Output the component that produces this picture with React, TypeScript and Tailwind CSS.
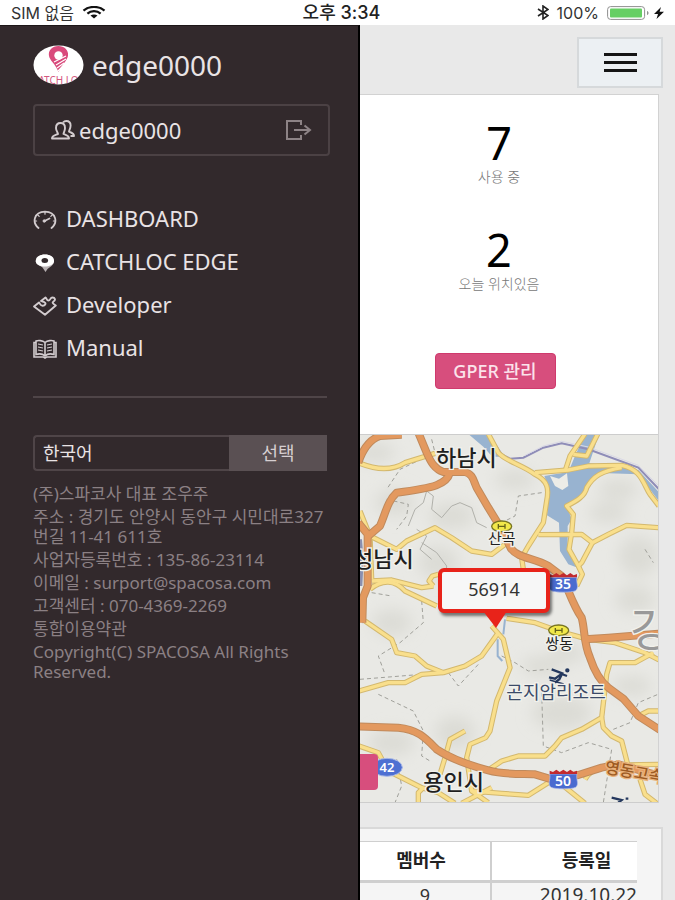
import { useState } from "react"

const MENU = [
  { label: "DASHBOARD", icon: <GaugeIcon /> },
  { label: "CATCHLOC EDGE", icon: <PinIcon /> },
  { label: "Developer", icon: <PuzzleIcon /> },
  { label: "Manual", icon: <BookIcon /> },
]

const HIGHWAYS = [
  "M10 110 C25 65 45 40 75 30 L140 26",
  "M190 20 L215 80 C228 110 240 130 265 138 L330 138 C355 145 355 165 365 185 L400 245 L440 310 L468 368 C490 398 540 395 580 420 L620 450 C640 490 655 540 680 575 C690 610 685 650 705 695 C720 740 735 765 760 785 L805 818 L850 870 L915 912",
  "M285 140 C275 175 240 185 125 200 C98 225 92 260 75 300 L40 330",
  "M10 290 L38 325 L38 480 L24 515 L22 590",
  "M10 901 L130 905 C190 910 215 940 245 970 C290 1000 350 1020 400 1033 C450 1047 500 1043 540 1045 L590 1060 L670 1047 L740 1025 L790 1015 L915 1050",
  "M690 640 L760 635 L915 623",
]

const ROADS = [
  "M15 112 C60 130 110 135 150 110 L240 82",
  "M400 24 L430 80 C450 105 500 115 540 145 C580 165 582 190 575 225 L565 290 L520 360 L500 395 L505 430",
  "M540 140 L640 132 L700 120 L800 118 C860 130 865 175 885 205 L912 240",
  "M690 24 L645 90 L632 130",
  "M728 24 L695 90 L655 85",
  "M800 125 C740 135 715 150 695 185 C690 210 665 225 635 240 L655 265 L650 320 L642 370 L670 420 L682 445 L665 480",
  "M550 326 L680 325 L712 350 L760 325 L815 298 L912 305",
  "M712 350 L680 410 L668 422",
  "M45 330 L125 370 L155 345 L240 305 L290 335 L350 375 L410 385 L450 355",
  "M15 255 L45 330 L50 460",
  "M45 490 C80 460 120 460 150 495 L245 540",
  "M50 465 L110 462 L200 485 L235 480",
  "M235 480 L222 465 L232 450 L250 445",
  "M30 585 L110 640 L125 680 L180 690 L215 720 L265 740",
  "M12 795 L100 770 L150 770 L200 745 L265 740 L330 720 L380 690 L430 620",
  "M410 600 L445 640 L465 725 L425 825 L405 915 L392 935 L345 955 L335 995 L350 1095 L400 1130",
  "M455 577 L540 590 L610 615 L700 640 L780 650 L870 680 L912 702",
  "M895 680 L840 710 L765 710 L755 745 L740 875 L680 910 L620 935 L600 960 L570 990 L490 990 L440 1005 L400 1032",
  "M740 875 L745 905 L770 930 L800 945 L818 1015",
  "M330 915 L285 940 L270 995 L255 1045",
  "M12 960 L70 980 L100 1035 L200 1085 L250 1100 L300 1132",
  "M205 1085 L190 1100 L190 1132",
  "M350 1095 L440 1102 L520 1108 L580 1070",
  "M620 1075 L690 1132",
  "M912 855 L880 855 L850 870",
  "M855 1060 L870 1105 L905 1132",
  "M690 1060 C715 1020 750 1015 912 1015",
  "M320 1132 L410 1085",
]

const TRAILS = [
  "M230 40 L240 80 L135 130 L95 190",
  "M95 220 L160 235 L155 270 L125 310",
  "M560 200 L490 210 L480 270 L440 290",
  "M200 525 L205 590 L135 650 L70 690 L90 745",
  "M15 760 L200 745",
  "M70 805 L175 855 L205 915 L200 990 L225 1005",
  "M280 740 L310 780 L370 715",
  "M560 800 L565 960 L620 980 L700 950 L770 970 L745 1130",
  "M440 690 L480 710 L520 735 L580 730",
  "M125 1000 L140 1080 L120 1130",
  "M775 910 L825 890 L850 830 L909 805",
  "M870 370 L895 410 M50 500 L110 510",
]

const SHADES = [
  [60, 80, 60, 30], [120, 230, 60, 40], [290, 270, 70, 40], [250, 410, 60, 50],
  [480, 160, 60, 30], [790, 190, 60, 30], [760, 260, 60, 30], [850, 390, 60, 60],
  [110, 590, 60, 40], [620, 860, 90, 50], [110, 950, 70, 40], [560, 720, 60, 30],
  [300, 920, 60, 50], [640, 680, 50, 30], [830, 780, 60, 30], [840, 520, 60, 40],
]

export default function App() {
  return (
    <div className="flex h-screen flex-col overflow-hidden bg-[#e9e9e9] font-['Noto_Sans','Noto_Sans_CJK_KR',sans-serif]">
      <StatusBar />
      <div className="flex min-h-0 flex-1">
        <Sidebar />
        <Content />
      </div>
    </div>
  )
}

function StatusBar() {
  return (
    <header className="grid h-[25px] shrink-0 grid-cols-3 items-center bg-white px-[11px] font-['Inter','Noto_Sans_CJK_KR',sans-serif] text-base leading-6 text-[#333]">
      <div className="flex items-center gap-2">
        <span>SIM 없음</span>
        <svg className="h-[13px] w-6" viewBox="0 0 24 13" fill="none" stroke="#111" strokeWidth="2.2">
          <path d="M1.5 4.6 C7 -0.3 17 -0.3 22.5 4.6" />
          <path d="M5.4 7.6 C9 4.4 15 4.4 18.6 7.6" />
          <path d="M8.5 9.6 C10.5 8 13.5 8 15.5 9.6 L12 12.6z" fill="#111" stroke="none" />
        </svg>
      </div>
      <div className="pl-2 text-center text-lg leading-6 font-medium whitespace-nowrap text-[#222]">오후 3:34</div>
      <div className="flex items-center justify-end gap-2">
        <svg className="h-[15px] w-3" viewBox="0 0 12 15" fill="none" stroke="#222" strokeWidth="1.6">
          <path d="M1 4 L11 10.5 L6 14 V1 L11 4.5 L1 11" />
        </svg>
        <span>100%</span>
        <svg className="h-[14px] w-[43px]" viewBox="0 0 43 14">
          <rect x="0.6" y="0.6" width="37" height="12.8" rx="3" fill="#fff" stroke="#8f8f8f" />
          <rect x="3" y="2.6" width="32" height="8.8" rx="1" fill="#66cf64" />
          <path d="M40 5 C42 5.5 42 8.5 40 9z" fill="#8f8f8f" />
        </svg>
        <svg className="-ml-1 h-3 w-[10px]" viewBox="0 0 10 12">
          <path d="M7 0 L0 7 H4 L2.5 12 L10 4.8 H5.6z" fill="#111" />
        </svg>
      </div>
    </header>
  )
}

function Sidebar() {
  const [lang, setLang] = useState("ko")

  return (
    <aside className="w-[360px] shrink-0 border-t border-r-2 border-black border-t-[#1d1718] bg-[#32292c] pr-7 pl-[33px] text-[#e9e3e5]">
      <div className="flex h-[78px] items-center gap-2">
        <LogoIcon />
        <span className="text-[28px] leading-9">edge0000</span>
      </div>
      <div className="flex h-[52px] items-center gap-1 rounded-sm border-2 border-[#4b4144] px-4">
        <UsersIcon />
        <span className="flex-1 text-[22px] leading-7">edge0000</span>
        <button type="button" aria-label="logout">
          <svg className="h-5 w-[26px]" viewBox="0 0 26 20" fill="none" stroke="#8d8386" strokeWidth="2">
            <path d="M15 5 V1 H1 V19 H15 V15" />
            <path d="M8 10 H23 M18.5 5.5 L24 10 L18.5 14.5" />
          </svg>
        </button>
      </div>

      <nav className="mt-10 mr-[3px] flex flex-col border-b-2 border-[#4f4548] pb-7">
        {MENU.map((item) => (
          <a key={item.label} href="#" className="flex h-[43px] items-center gap-[9px] text-[22px]">
            {item.icon}
            <span className="leading-7">{item.label}</span>
          </a>
        ))}
      </nav>

      <div className="mt-[37px] mr-[3px] flex h-9">
        <select
          aria-label="언어"
          value={lang}
          onChange={(ev) => setLang(ev.target.value)}
          className="min-w-0 flex-1 appearance-none rounded-l-sm border-2 border-r-0 border-[#4f4548] bg-transparent px-2 text-lg leading-6 text-[#e9e3e5]"
        >
          <option value="ko">한국어</option>
          <option value="en">English</option>
        </select>
        <button type="button" className="w-[98px] bg-[#5a5053] text-lg leading-6 text-[#d6cfd1]">
          선택
        </button>
      </div>

      <footer className="mt-[13px] flex flex-col gap-[3px] text-[17px] leading-5 whitespace-nowrap text-[#8b8084]">
        <p>(주)스파코사 대표 조우주</p>
        <p>
          주소 : 경기도 안양시 동안구 시민대로327
          <br />
          번길 11-41 611호
        </p>
        <p>사업자등록번호 : 135-86-23114</p>
        <p>이메일 : surport@spacosa.com</p>
        <p>고객센터 : 070-4369-2269</p>
        <p>
          <a href="#">통합이용약관</a>
        </p>
        <p>
          Copyright(C) SPACOSA All Rights
          <br />
          Reserved.
        </p>
      </footer>
    </aside>
  )
}

function Content() {
  return (
    <main className="min-w-0 flex-1 overflow-hidden">
      <div className="flex h-[69px] justify-end pt-3 pr-3">
        <button
          type="button"
          aria-label="menu"
          className="flex h-[51px] w-[86px] flex-col items-center justify-center gap-[5px] border-2 border-[#d6d9db] bg-[#ecf0f3]"
        >
          <span className="h-[3px] w-[33px] bg-[#151515]" />
          <span className="h-[3px] w-[33px] bg-[#151515]" />
          <span className="h-[3px] w-[33px] bg-[#151515]" />
        </button>
      </div>

      <section className="mr-4 border-t border-r border-[#d2d2d2] bg-white">
        <div className="flex h-[339px] flex-col items-center pt-6 pr-7">
          <Stat value="7" label="사용 중" />
          <Stat value="2" label="오늘 위치있음" />
          <button
            type="button"
            className="mt-5 h-9 w-[121px] rounded-sm border border-[#cf3a6d] bg-[#d74e7d] text-lg leading-6 font-medium text-[#fbe3eb]"
          >
            GPER 관리
          </button>
        </div>
        <Map />
      </section>

      <section className="mt-6 mr-3 border-2 border-l-0 border-[#d9d9d9] bg-[#f5f5f5] pt-3 pr-6">
        <table className="w-full table-fixed border-collapse text-center text-lg leading-6 text-[#333]">
          <thead>
            <tr className="h-10 border-t border-b-3 border-[#cfcfcf] bg-white text-[#222]">
              <th className="w-[131px] border-r-2 border-[#cfcfcf] pr-2 pb-[2px] font-bold">멤버수</th>
              <th className="pb-[2px] pl-11 font-bold">등록일</th>
            </tr>
          </thead>
          <tbody>
            <tr>
              <td className="border-r-2 border-[#cfcfcf]">9</td>
              <td className="text-right text-[19px] whitespace-nowrap">2019.10.22</td>
            </tr>
          </tbody>
        </table>
      </section>
    </main>
  )
}

function Stat({ value, label }: { value: string; label: string }) {
  return (
    <div className="flex h-[107px] flex-col items-center pl-2">
      <strong className="text-[45px] leading-[48px] font-normal text-black">{value}</strong>
      <span className="text-sm leading-5 font-light text-[#777]">{label}</span>
    </div>
  )
}

function Map() {
  return (
    <div className="relative overflow-hidden border-t border-b border-[#cdcdcd]">
      <svg className="block w-full" viewBox="15 27 894 1101" role="img" aria-label="지도">
        <defs>
          <filter id="shade" x="-50%" y="-50%" width="200%" height="200%">
            <feGaussianBlur stdDeviation="22" />
          </filter>
        </defs>
        <rect x="15" y="27" width="894" height="1101" fill="#e9e9e5" />
        <g fill="#dcdcd6" filter="url(#shade)">
          {SHADES.map(([cx, cy, rx, ry], i) => (
            <ellipse key={i} cx={cx} cy={cy} rx={rx} ry={ry} />
          ))}
        </g>

        {/* water */}
        <g fill="#98b3d0">
          <path d="M340 24 L402 24 L440 92 L412 92 L385 62z" />
          <path d="M690 24 H732 L703 112 L790 122 L850 132 L909 196 V222 L850 145 L760 142 L715 150 L692 180 L690 205 L635 240 L650 280 L638 300 L638 370 L668 425 L640 415 L615 375 L612 290 L576 268 L582 190 L568 150 L640 138 L660 90z" />
          <path d="M585 150 L612 158 L636 142 L640 180 L622 192 L600 180z" fill="#ecece7" />
        </g>
        <path d="M450 580 L445 625 M428 640 L428 690 L442 705" fill="none" stroke="#98b3d0" strokeWidth="6" />
        <path d="M15 340 L20 400 L16 480 M15 540 L28 590" fill="none" stroke="#8b8fae" strokeWidth="12" />

        {/* trails and borders */}
        <g fill="none" stroke="#a0a09a" strokeWidth="3" strokeDasharray="12 9">
          {TRAILS.map((d) => (
            <path key={d} d={d} />
          ))}
        </g>
        <path
          d="M160 300 L180 250 L205 230 L215 195 L235 210 L230 250 L260 275 L290 240 L315 230 L350 245 L365 290 L395 305 M200 350 L245 380 L275 420 L270 460 M185 310 L215 330 L195 370 L230 400"
          fill="none"
          stroke="#b0b0aa"
          strokeWidth="3"
        />

        {/* railway */}
        <path d="M405 32 L440 85 L465 98 L505 95 L565 65 L620 52 L700 70 L850 125 L912 190" fill="none" stroke="#8f8db8" strokeWidth="6" />
        <path d="M510 88 L565 60 L620 46 L700 63 L850 118 L912 180" fill="none" stroke="#d9d8e6" strokeWidth="3" />

        <g fill="none" strokeLinejoin="round">
          <g stroke="#d3b86e" strokeWidth="16">
            {ROADS.map((d) => (
              <path key={d} d={d} />
            ))}
          </g>
          <g stroke="#f9df8c" strokeWidth="10">
            {ROADS.map((d) => (
              <path key={d} d={d} />
            ))}
          </g>
          <g stroke="#c08a5c" strokeWidth="24">
            {HIGHWAYS.map((d) => (
              <path key={d} d={d} />
            ))}
          </g>
          <g stroke="#e3995f" strokeWidth="18">
            {HIGHWAYS.map((d) => (
              <path key={d} d={d} />
            ))}
          </g>
        </g>

        {/* interchanges */}
        <g fill="#f2e84a" stroke="#77741f" strokeWidth="4">
          <ellipse cx="440" cy="301" rx="30" ry="16" />
          <ellipse cx="611" cy="613" rx="30" ry="16" />
        </g>
        <path d="M430 294 V308 M450 294 V308 M430 301 H450 M601 606 V620 M621 606 V620 M601 613 H621" stroke="#66631a" strokeWidth="4" />

        {/* ski slope */}
        <g fill="none" stroke="#24385e" strokeWidth="7">
          <path d="M590 730 L622 742 L612 762 M622 742 L600 758 L582 754 M612 760 L600 770 M620 744 L636 750" />
          <path d="M584 762 L626 774" strokeWidth="4" />
          <circle cx="637" cy="733" r="3" />
          <path d="M770 1115 L800 1122 L790 1130 M812 1118 h8" />
        </g>

        {/* route shields */}
        <Shield x={582} y={440} no="35" />
        <Shield x={582} y={1030} no="50" />
        <ellipse cx="96" cy="1024" rx="46" ry="27" fill="#4e70d2" stroke="#a9b8e6" strokeWidth="3" />
        <text x="96" y="1038" fontSize="39" fontWeight="600" textAnchor="middle" fill="#fff">42</text>

        <g fill="#1f1f1f" stroke="#f1f1ec" strokeWidth="8" paintOrder="stroke" fontSize="66" fontWeight="500">
          <text x="243" y="121">하남시</text>
          <text x="-6" y="422">성남시</text>
          <text x="205" y="1092">용인시</text>
          <text x="399" y="355" fontSize="45" fontWeight="400">산곡</text>
          <text x="571" y="670" fontSize="45" fontWeight="400">쌍동</text>
          <text x="454" y="818" fontSize="54" fontWeight="400" fill="#3b4a68">곤지암리조트</text>
          <text x="826" y="660" fontSize="138" fontWeight="400" fill="#999">강</text>
          <text x="748" y="1040" fontSize="48" fill="#9c5a22" stroke="#e9b27c" transform="rotate(10 748 1040)">영동고속</text>
        </g>
      </svg>

      {/* device callout */}
      <button
        type="button"
        className="absolute top-[133px] left-[78px] h-[45px] w-28 rounded-md border-4 border-[#e8231a] bg-[#f7f7f7] pb-1 text-lg leading-6 text-[#333] shadow-[2px_3px_3px_rgba(0,0,0,0.5)]"
      >
        56914
      </button>
      <svg className="absolute top-[176px] left-[123px] h-[17px] w-6" viewBox="0 0 24 17">
        <path d="M0 0 H24 L13 17z" fill="#e8231a" />
      </svg>
      <button type="button" aria-label="목록" className="absolute bottom-3 left-0 h-9 w-[18px] rounded-r-sm bg-[#d74e7d]" />
    </div>
  )
}

function Shield({ x, y, no }: { x: number; y: number; no: string }) {
  return (
    <g transform={`translate(${x} ${y})`}>
      <path d="M2 14 H84 C80 30 92 44 80 54 C66 60 20 60 6 54 C-6 44 6 30 2 14z" fill="#4a6bd0" stroke="#b4c0e8" strokeWidth="2" />
      <path d="M2 14 V4 L12 8 L22 1 L32 8 L43 1 L54 8 L64 1 L74 8 L84 4 V14z" fill="#c22a2e" />
      <text x="42" y="49" fontSize="42" fontWeight="600" textAnchor="middle" fill="#fff">{no}</text>
    </g>
  )
}

function LogoIcon() {
  return (
    <svg className="h-10 w-[51px] shrink-0" viewBox="0 0 51 40">
      <defs>
        <clipPath id="badge">
          <ellipse cx="25.5" cy="20" rx="25" ry="19.5" />
        </clipPath>
      </defs>
      <g clipPath="url(#badge)">
        <rect width="51" height="40" fill="#fff" />
        <path d="M25.5 1 C19 1 15 5.5 16 11 C17 16 22 18 25.5 27 C29 19 34 16 35 11 C36 5 31 1 25.5 1z" fill="#d94a7c" />
        <path d="M21 17 L33 11 M23 20 L33 14 M24 23 L31 18 M25 26 L29 22" stroke="#fff" strokeWidth="1.2" />
        <circle cx="25.5" cy="10.5" r="4.2" fill="#fff" />
        <text x="25.5" y="39" fontSize="10" textAnchor="middle" fill="#d4587f">CATCH LOC</text>
      </g>
    </svg>
  )
}

function UsersIcon() {
  return (
    <svg className="h-5 w-6 shrink-0" viewBox="0 0 24 20" fill="none" stroke="#d3cccf" strokeWidth="1.9" strokeLinejoin="round">
      <path d="M1 18.5 C1 15.5 3.5 15.3 7 14 C7 12.5 5 11 5 8 C5 4.8 7 3 9.5 3 C12 3 14 4.8 14 8 C14 11 12.5 12.5 12.5 14 C15.5 15.3 18 15.5 18 18.5z" />
      <path d="M12 2.5 C13 1.3 14 1 15.3 1 C18 1 19.6 3 19.6 5.6 C19.6 8.6 18 10 18 11.6 C20.5 12.8 23 13 23 16 H19.5" />
    </svg>
  )
}

function GaugeIcon() {
  return (
    <svg className="mt-1 h-5 w-6 shrink-0" viewBox="0 0 24 20" fill="none" stroke="#d3cccf" strokeWidth="1.8" strokeLinecap="round">
      <path d="M5.5 18 C-1 12.5 0.5 2 12 1.6 C23.5 2 25 12.5 18.5 18" />
      <path d="M12 2 V4.2 M4.8 5 L6.2 6.4 M19.2 5 L17.8 6.4 M1.8 11 H3.6 M20.4 11 H22.2" strokeWidth="1.2" />
      <path d="M11.5 11 L16.5 8.5" />
      <circle cx="11.3" cy="11" r="1.3" fill="#d3cccf" strokeWidth="0.8" />
    </svg>
  )
}

function PinIcon() {
  return (
    <svg className="mt-1 h-5 w-6 shrink-0" viewBox="0 0 24 20">
      <path d="M12 1.5 C6 1.5 2.5 4.5 2.8 8.5 C3.2 12 7.5 12.5 9.5 14.5 L12.5 19 L14.5 16 C17 14 20.5 12.5 21 8.5 C21.3 4.5 18 1.5 12 1.5z" fill="#b7b0b2" />
      <path d="M12 1.5 C6 1.5 2.5 4.5 2.8 8.5 C3.2 12 7.5 13.5 11.5 13.5 C16.5 13.5 20.5 12 21 8.5 C21.3 4.5 18 1.5 12 1.5z" fill="#fff" />
      <ellipse cx="11.8" cy="7.5" rx="3.3" ry="2.5" fill="#32292c" />
    </svg>
  )
}

function PuzzleIcon() {
  return (
    <svg className="mt-1 h-5 w-6 shrink-0" viewBox="0 0 24 20" fill="none" stroke="#d3cccf" strokeWidth="1.9" strokeLinejoin="round">
      <path d="M1 10.5 L6 6.5 C7 7.5 7 9.5 9.5 9.8 C12 10 13.5 7.5 11.5 6.2 C10.5 5.5 9 5.5 8 5 L12.5 1.5 C14 2.5 13.5 4.5 15.5 4.5 C17.5 4.5 17 1.5 19.5 1.5 C22 1.5 23 4 20.5 5.5 C19 6.5 19.5 7.5 22.8 9.5 L12 18.8z" />
    </svg>
  )
}

function BookIcon() {
  return (
    <svg className="mt-1 h-5 w-6 shrink-0" viewBox="0 0 24 20" fill="none" stroke="#d3cccf" strokeWidth="1.6">
      <path d="M12 3.5 C9.5 1.2 5 1.2 3 2 V15.5 C6 14.5 10 15 12 17 C14 15 18 14.5 21 15.5 V2 C19 1.2 14.5 1.2 12 3.5z M12 3.5 V17" />
      <path d="M3 3.5 H1 V18 H10.5 L12 19 L13.5 18 H23 V3.5 H21" />
      <path d="M5 5 L10 6 M5 8 L10 9 M5 11 L10 12 M19 5 L14 6 M19 8 L14 9 M19 11 L14 12" strokeWidth="1.2" />
    </svg>
  )
}
